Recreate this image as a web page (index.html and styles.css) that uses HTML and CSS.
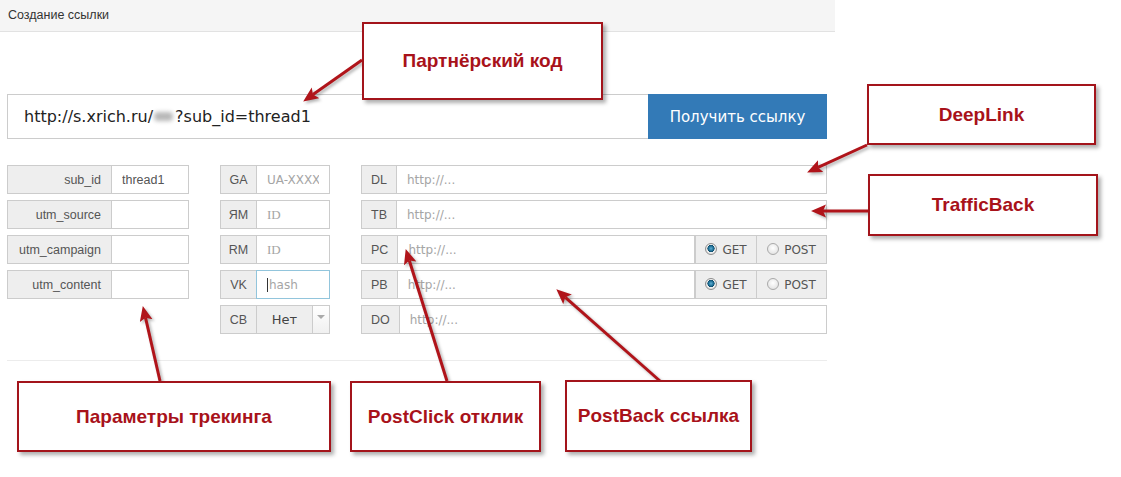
FILE: index.html
```html
<html lang="ru">

<head>
    <meta charset="UTF-8">
    <meta name="viewport" content="width=device-width, initial-scale=1.0">
    <title>Создание ссылки</title>

    <link rel="stylesheet" href="styles.css">
</head>

<body>
    <div class="panel">
        <div class="panel-head">Создание ссылки</div>
        <div class="panel-body">
            <div class="link-row">
                <div class="link-out">http://s.xrich.ru/<span class="blur"></span>?sub_id=thread1</div>
                <button class="link-btn" type="button">Получить ссылку</button>
            </div>

            <div class="fields">
                <!-- tracking params -->
                <div class="col col-utm">
                    <div class="field">
                        <span class="addon addon-wide">sub_id</span>
                        <input class="inp" type="text" value="thread1">
                    </div>
                    <div class="field">
                        <span class="addon addon-wide">utm_source</span>
                        <input class="inp" type="text">
                    </div>
                    <div class="field">
                        <span class="addon addon-wide">utm_campaign</span>
                        <input class="inp" type="text">
                    </div>
                    <div class="field">
                        <span class="addon addon-wide">utm_content</span>
                        <input class="inp" type="text">
                    </div>
                </div>

                <!-- counters -->
                <div class="col col-ids">
                    <div class="field">
                        <span class="addon addon-short">GA</span>
                        <input class="inp" type="text" placeholder="UA-XXXXX">
                    </div>
                    <div class="field">
                        <span class="addon addon-short">ЯМ</span>
                        <input class="inp inp-serif" type="text" placeholder="ID">
                    </div>
                    <div class="field">
                        <span class="addon addon-short">RM</span>
                        <input class="inp inp-serif" type="text" placeholder="ID">
                    </div>
                    <div class="field">
                        <span class="addon addon-short">VK</span>
                        <div class="inp inp-focus"><span class="caret"></span>hash</div>
                    </div>
                    <div class="field">
                        <span class="addon addon-short">CB</span>
                        <div class="select">
                            <span class="select-val">Нет</span>
                            <span class="select-btn"><span class="select-tri"></span></span>
                        </div>
                    </div>
                </div>

                <!-- urls -->
                <div class="col col-urls">
                    <div class="field">
                        <span class="addon">DL</span>
                        <input class="inp" type="text" placeholder="http://...">
                    </div>
                    <div class="field">
                        <span class="addon">TB</span>
                        <input class="inp" type="text" placeholder="http://...">
                    </div>
                    <div class="field">
                        <span class="addon">PC</span>
                        <input class="inp" type="text" placeholder="http://...">
                        <label class="method method-get"><input type="radio" name="pc" checked> GET</label>
                        <label class="method method-post"><input type="radio" name="pc"> POST</label>
                    </div>
                    <div class="field">
                        <span class="addon">PB</span>
                        <input class="inp" type="text" placeholder="http://...">
                        <label class="method method-get"><input type="radio" name="pb" checked> GET</label>
                        <label class="method method-post"><input type="radio" name="pb"> POST</label>
                    </div>
                    <div class="field">
                        <span class="addon">DO</span>
                        <input class="inp" type="text" placeholder="http://...">
                    </div>
                </div>
            </div>

            <div class="sep"></div>
        </div>
    </div>

    <!-- annotations -->
    <svg class="arrows" width="1121" height="477" viewBox="0 0 1121 477">
        <defs>
            <marker id="head" markerUnits="userSpaceOnUse" markerWidth="16" markerHeight="14" refX="3" refY="6.5" orient="auto">
                <path d="M0,0 L15,6.5 L0,13 L3,6.5 z" fill="#b0141a" />
            </marker>
        </defs>
        <g stroke="#b0141a" stroke-width="3" marker-end="url(#head)">
            <line x1="362" y1="60" x2="313" y2="94.6" />
            <line x1="867" y1="145" x2="818" y2="167.4" />
            <line x1="868" y1="211" x2="823" y2="211" />
            <line x1="160" y1="381" x2="145.5" y2="317.7" />
            <line x1="447" y1="381" x2="409.3" y2="260.5" />
            <line x1="660" y1="381" x2="565.3" y2="297.3" />
        </g>
    </svg>

    <div class="callout c-partner">Партнёрский код</div>
    <div class="callout c-deeplink">DeepLink</div>
    <div class="callout c-traffic">TrafficBack</div>
    <div class="callout c-params">Параметры трекинга</div>
    <div class="callout c-postclick">PostClick отклик</div>
    <div class="callout c-postback">PostBack ссылка</div>
</body>

</html>
```

FILE: styles.css
```css
body {
    margin: 0;
    background-color: #fff;
    font-family: "Liberation Sans", Arial, sans-serif;
    color: #333;
    position: relative;
    width: 1121px;
    height: 477px;
    overflow: hidden;
}

.panel {
    width: 835px;
}

.panel-head {
    height: 31px;
    line-height: 30px;
    padding-left: 8px;
    background-color: #f5f5f5;
    border-bottom: 1px solid #e2e2e2;
    font-size: 12.5px;
    color: #333;
}

.panel-body {
    padding: 62px 8px 0 7px;
}

/* link output */
.link-row {
    display: flex;
    height: 45px;
}

.link-out {
    flex: 1;
    border: 1px solid #ccc;
    border-right: 0;
    padding-left: 16px;
    line-height: 43px;
    font-family: "DejaVu Sans", sans-serif;
    font-size: 16px;
    color: #222;
    white-space: nowrap;
}

.blur {
    display: inline-block;
    width: 19px;
    height: 9px;
    margin: 0 2px 0 1px;
    background-color: #b8b8b8;
    border-radius: 4px;
    filter: blur(2px);
    vertical-align: 1px;
}

.link-btn {
    width: 179px;
    padding: 0;
    border: none;
    background-color: #337ab7;
    color: #fff;
    font-family: "DejaVu Sans", sans-serif;
    font-size: 15px;
    cursor: pointer;
}

/* field grid */
.fields {
    display: flex;
    gap: 31px;
    margin-top: 26px;
}

.col {
    display: flex;
    flex-direction: column;
    gap: 6px;
}

.col-utm {
    width: 182px;
}

.col-ids {
    width: 110px;
}

.col-urls {
    flex: 1;
}

.field {
    display: flex;
    height: 29px;
}

.addon {
    flex: none;
    box-sizing: border-box;
    display: flex;
    align-items: center;
    justify-content: center;
    padding: 0 10px;
    background-color: #eee;
    border: 1px solid #ccc;
    font-size: 12.5px;
    color: #555;
}

.col-urls .addon {
    padding: 0 9px;
}

.addon-wide {
    width: 105px;
    justify-content: flex-end;
}

.addon-short {
    width: 37px;
    padding: 0;
}

.inp {
    flex: 1;
    min-width: 0;
    box-sizing: border-box;
    height: 29px;
    margin: 0;
    padding: 0 10px;
    border: 1px solid #ccc;
    border-left: 0;
    border-radius: 0;
    background-color: #fff;
    font-family: "Liberation Sans", Arial, sans-serif;
    font-size: 12.5px;
    color: #555;
    outline: none;
}

.inp::placeholder {
    font-family: "DejaVu Sans", sans-serif;
    font-size: 12px;
    color: #a5a5a5;
}

.inp-serif::placeholder {
    font-family: "Liberation Serif", serif;
    font-size: 13px;
}

.inp-focus {
    display: flex;
    align-items: center;
    border: 1px solid #92c5dc;
    margin-left: -1px;
    padding-left: 10px;
    font-family: "DejaVu Sans", sans-serif;
    font-size: 12px;
    color: #a5a5a5;
}

.caret {
    width: 1px;
    height: 14px;
    background-color: #333;
    margin-right: 1px;
}

/* CB select */
.select {
    flex: 1;
    display: flex;
    border: 1px solid #ccc;
    border-left: 0;
    background-color: #eee;
}

.select-val {
    flex: 1;
    display: flex;
    align-items: center;
    justify-content: center;
    font-family: "DejaVu Sans", sans-serif;
    font-size: 13px;
    color: #444;
}

.select-btn {
    width: 16px;
    display: flex;
    align-items: center;
    justify-content: center;
    border-left: 1px solid #ccc;
    background: linear-gradient(#fff, #f0f0f0);
}

.select-tri {
    width: 0;
    height: 0;
    border-left: 4px solid transparent;
    border-right: 4px solid transparent;
    border-top: 4px solid #aaa;
    margin-top: -6px;
}

/* GET / POST */
.method {
    flex: none;
    box-sizing: border-box;
    display: flex;
    align-items: center;
    justify-content: center;
    gap: 5px;
    border: 1px solid #ccc;
    border-left: 0;
    background-color: #eee;
    font-family: "DejaVu Sans", sans-serif;
    font-size: 12px;
    color: #555;
    cursor: pointer;
}

.method-get {
    width: 62px;
    border-left: 1px solid #ccc;
}

.method-post {
    width: 70px;
}

.method input {
    appearance: none;
    -webkit-appearance: none;
    width: 12px;
    height: 12px;
    margin: 0 0 2px 0;
    border: 1px solid #a9a9a9;
    border-radius: 50%;
    background: radial-gradient(circle at 50% 40%, #fff 0, #e4e4e4 6px);
}

.method input:checked {
    border-color: #8f8f8f;
    background: radial-gradient(circle at 50% 45%, #5fb0d4 0, #17658c 2.8px, #0f4a66 3.4px, #f2f2f2 3.8px, #dcdcdc 6px);
}

.sep {
    margin-top: 26px;
    border-top: 1px solid #ececec;
}

/* annotation overlay */
.arrows {
    position: absolute;
    left: 0;
    top: 0;
    pointer-events: none;
    filter: drop-shadow(2px 2px 1.5px rgba(0, 0, 0, 0.3));
}

.callout {
    position: absolute;
    box-sizing: border-box;
    display: flex;
    align-items: center;
    justify-content: center;
    background-color: #fff;
    border: 2px solid #a3141b;
    box-shadow: 3px 3px 4px rgba(0, 0, 0, 0.32);
    font-family: "Liberation Sans", Arial, sans-serif;
    font-weight: 700;
    font-size: 19px;
    color: #a8121a;
    white-space: nowrap;
}

.c-partner {
    left: 362px;
    top: 22px;
    width: 241px;
    height: 78px;
}

.c-deeplink {
    left: 867px;
    top: 84px;
    width: 229px;
    height: 61px;
}

.c-traffic {
    left: 868px;
    top: 174px;
    width: 230px;
    height: 62px;
}

.c-params {
    left: 17px;
    top: 381px;
    width: 314px;
    height: 71px;
}

.c-postclick {
    left: 350px;
    top: 381px;
    width: 191px;
    height: 71px;
}

.c-postback {
    left: 565px;
    top: 380px;
    width: 187px;
    height: 72px;
}
```
